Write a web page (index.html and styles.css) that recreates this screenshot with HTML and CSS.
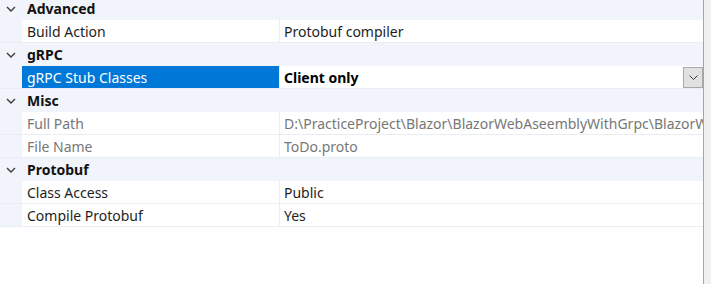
FILE: index.html
```html
<!DOCTYPE html>
<html>
<head>
<meta charset="utf-8">
<link rel="stylesheet" href="styles.css">
</head>
<body>
<div class="frame">
  <div class="grid">
    <div class="list">
      <div class="cat"><svg class="chev" width="10" height="6" viewBox="0 0 10 6"><path d="M1 1 L5 5 L9 1" fill="none" stroke="#3c3c3c" stroke-width="1.4"/></svg><span>Advanced</span></div>
      <div class="prop"><div class="name">Build Action</div><div class="val">Protobuf compiler</div></div>
      <div class="cat"><svg class="chev" width="10" height="6" viewBox="0 0 10 6"><path d="M1 1 L5 5 L9 1" fill="none" stroke="#3c3c3c" stroke-width="1.4"/></svg><span>gRPC</span></div>
      <div class="prop"><div class="name sel">gRPC Stub Classes</div><div class="val"><b>Client only</b><span class="drop"><svg width="9" height="5" viewBox="0 0 9 5"><path d="M0.5 0.5 L4.5 4.5 L8.5 0.5" fill="none" stroke="#3c3c3c" stroke-width="1"/></svg></span></div></div>
      <div class="cat"><svg class="chev" width="10" height="6" viewBox="0 0 10 6"><path d="M1 1 L5 5 L9 1" fill="none" stroke="#3c3c3c" stroke-width="1.4"/></svg><span>Misc</span></div>
      <div class="prop dis"><div class="name">Full Path</div><div class="val">D:\PracticeProject\Blazor\BlazorWebAseemblyWithGrpc\BlazorWebAseemblyWithGrpc\Server\Protos\ToDo.proto</div></div>
      <div class="prop dis"><div class="name">File Name</div><div class="val">ToDo.proto</div></div>
      <div class="cat"><svg class="chev" width="10" height="6" viewBox="0 0 10 6"><path d="M1 1 L5 5 L9 1" fill="none" stroke="#3c3c3c" stroke-width="1.4"/></svg><span>Protobuf</span></div>
      <div class="prop"><div class="name">Class Access</div><div class="val">Public</div></div>
      <div class="prop"><div class="name">Compile Protobuf</div><div class="val">Yes</div></div>
    </div>
  </div>
  <div class="scroll"></div>
</div>
</body>
</html>
```
FILE: styles.css
```css
html, body {
  margin: 0;
  padding: 0;
  background: #ffffff;
}
body {
  width: 711px;
  height: 284px;
  overflow: hidden;
  font-family: "Noto Sans", "Open Sans", sans-serif;
  font-size: 14px;
  color: #1e1e1e;
}
.frame {
  display: flex;
  height: 284px;
}
.grid {
  width: 703px;
  overflow: hidden;
  border-right: 1px solid #a6a6a6;
}
.scroll {
  flex: 1;
  background: #f0f0f0;
}
.list {
  margin-top: -3px;
}
.cat {
  display: flex;
  align-items: center;
  height: 23px;
  background: #f1f4fa;
  font-weight: bold;
  color: #111111;
}
.chev {
  width: 10px;
  margin-left: 6px;
  margin-right: 11px;
}
.prop {
  display: flex;
  height: 22px;
  padding-left: 22px;
  background: #f1f4fa;
  border-bottom: 1px solid #eaedf2;
}
.name {
  width: 252px;
  padding-left: 5px;
  background: #ffffff;
  display: flex;
  align-items: center;
  white-space: nowrap;
}
.name.sel {
  background: #0078d7;
  color: #ffffff;
}
.val {
  flex: 1;
  display: flex;
  align-items: center;
  padding-left: 4px;
  background: #ffffff;
  border-left: 1px solid #eaedf2;
  white-space: nowrap;
  overflow: hidden;
}
.val b {
  flex: 1;
  color: #000000;
}
.dis {
  color: #777777;
}
.drop {
  width: 18px;
  height: 19px;
  background: #e1e1e1;
  border: 1px solid #a8a8a8;
  display: flex;
  align-items: center;
  justify-content: center;
}
```
